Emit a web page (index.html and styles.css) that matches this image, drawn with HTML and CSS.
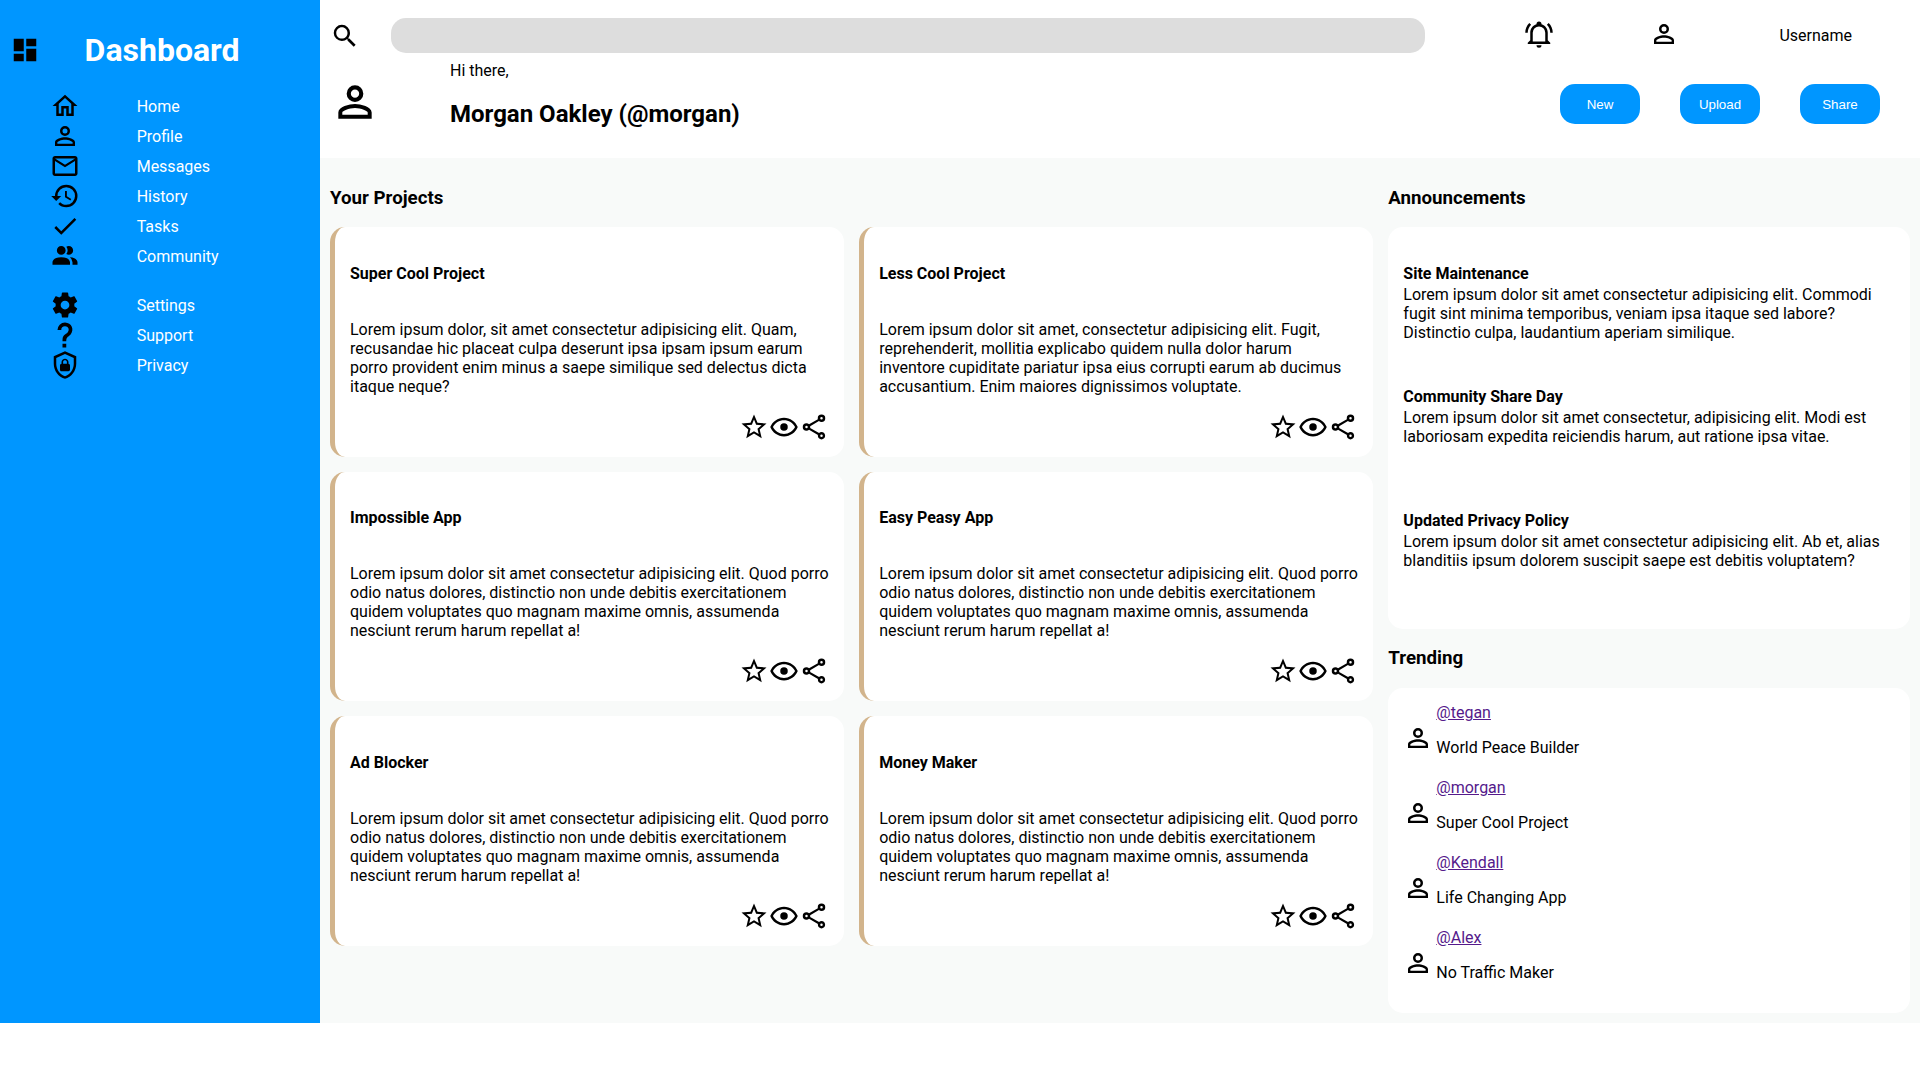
FILE: index.html
```html
<!DOCTYPE html>
<html lang="en">
<head>
<meta charset="utf-8">
<title>Dashboard</title>
<link rel="stylesheet" href="styles.css">
</head>
<body>
<svg class="sprite" aria-hidden="true">
  <symbol id="account" viewBox="0 0 24 24"><path d="M12,4A4,4 0 0,1 16,8A4,4 0 0,1 12,12A4,4 0 0,1 8,8A4,4 0 0,1 12,4M12,6A2,2 0 0,0 10,8A2,2 0 0,0 12,10A2,2 0 0,0 14,8A2,2 0 0,0 12,6M12,13C14.67,13 20,14.33 20,17V20H4V17C4,14.33 9.33,13 12,13M12,14.9C9.03,14.9 5.9,16.36 5.9,17V18.1H18.1V17C18.1,16.36 14.97,14.9 12,14.9Z"/></symbol>
  <symbol id="star" viewBox="0 0 24 24"><path d="M12,15.39L8.24,17.66L9.23,13.38L5.91,10.5L10.29,10.13L12,6.09L13.71,10.13L18.09,10.5L14.77,13.38L15.76,17.66M22,9.24L14.81,8.63L12,2L9.19,8.63L2,9.24L7.45,13.97L5.82,21L12,17.27L18.18,21L16.54,13.97L22,9.24Z"/></symbol>
  <symbol id="eye" viewBox="0 0 24 24"><path d="M12,9A3,3 0 0,1 15,12A3,3 0 0,1 12,15A3,3 0 0,1 9,12A3,3 0 0,1 12,9M12,4.5C17,4.5 21.27,7.61 23,12C21.27,16.39 17,19.5 12,19.5C7,19.5 2.73,16.39 1,12C2.73,7.61 7,4.5 12,4.5M3.18,12C4.83,15.36 8.24,17.5 12,17.5C15.76,17.5 19.17,15.36 20.82,12C19.17,8.64 15.76,6.5 12,6.5C8.24,6.5 4.83,8.64 3.18,12Z"/></symbol>
  <symbol id="share" viewBox="0 0 24 24"><path d="M18,16.08C17.24,16.08 16.56,16.38 16.04,16.85L8.91,12.7C8.96,12.47 9,12.24 9,12C9,11.76 8.96,11.53 8.91,11.3L15.96,7.19C16.5,7.69 17.21,8 18,8A3,3 0 0,0 21,5A3,3 0 0,0 18,2A3,3 0 0,0 15,5C15,5.24 15.04,5.47 15.09,5.7L8.04,9.81C7.5,9.31 6.79,9 6,9A3,3 0 0,0 3,12A3,3 0 0,0 6,15C6.79,15 7.5,14.69 8.04,14.19L15.16,18.34C15.11,18.55 15.08,18.77 15.08,19C15.08,20.61 16.39,21.91 18,21.91C19.61,21.91 20.92,20.61 20.92,19C20.92,17.39 19.61,16.08 18,16.08M18,4A1,1 0 0,1 19,5A1,1 0 0,1 18,6A1,1 0 0,1 17,5A1,1 0 0,1 18,4M6,13A1,1 0 0,1 5,12A1,1 0 0,1 6,11A1,1 0 0,1 7,12A1,1 0 0,1 6,13M18,20A1,1 0 0,1 17,19A1,1 0 0,1 18,18A1,1 0 0,1 19,19A1,1 0 0,1 18,20Z"/></symbol>
</svg>
<div class="page">
  <aside class="sidebar">
    <div class="brand">
      <svg class="icon" viewBox="0 0 24 24"><path d="M13,3V9H21V3M13,21H21V11H13M3,21H11V15H3M3,13H11V3H3V13Z"/></svg>
      <h1>Dashboard</h1>
    </div>
    <nav class="menu">
      <div class="item"><svg class="icon" viewBox="0 0 24 24"><path d="M12,5.69L17,10.19V18H15V12H9V18H7V10.19L12,5.69M12,3L2,12H5V20H11V14H13V20H19V12H22"/></svg><span>Home</span></div>
      <div class="item"><svg class="icon"><use href="#account"/></svg><span>Profile</span></div>
      <div class="item"><svg class="icon" viewBox="0 0 24 24"><path d="M22 6C22 4.9 21.1 4 20 4H4C2.9 4 2 4.9 2 6V18C2 19.1 2.9 20 4 20H20C21.1 20 22 19.1 22 18V6M20 6L12 11L4 6H20M20 18H4V8L12 13L20 8V18Z"/></svg><span>Messages</span></div>
      <div class="item"><svg class="icon" viewBox="0 0 24 24"><path d="M13.5,8H12V13L16.28,15.54L17,14.33L13.5,12.25V8M13,3A9,9 0 0,0 4,12H1L4.96,16.03L9,12H6A7,7 0 0,1 13,5A7,7 0 0,1 20,12A7,7 0 0,1 13,19C11.07,19 9.32,18.21 8.06,16.94L6.64,18.36C8.27,20 10.5,21 13,21A9,9 0 0,0 22,12A9,9 0 0,0 13,3"/></svg><span>History</span></div>
      <div class="item"><svg class="icon" viewBox="0 0 24 24"><path d="M21,7L9,19L3.5,13.5L4.91,12.09L9,16.17L19.59,5.59L21,7Z"/></svg><span>Tasks</span></div>
      <div class="item"><svg class="icon" viewBox="0 0 24 24"><path d="M16 17V19H2V17S2 13 9 13 16 17 16 17M12.5 7.5A3.5 3.5 0 1 0 9 11A3.5 3.5 0 0 0 12.5 7.5M15.94 13A5.32 5.32 0 0 1 18 17V19H22V17S22 13.37 15.94 13M15 4A3.39 3.39 0 0 0 13.07 4.59A5 5 0 0 1 13.07 10.41A3.39 3.39 0 0 0 15 11A3.5 3.5 0 0 0 15 4Z"/></svg><span>Community</span></div>
    </nav>
    <nav class="menu">
      <div class="item"><svg class="icon" viewBox="0 0 24 24"><path d="M12,15.5A3.5,3.5 0 0,1 8.5,12A3.5,3.5 0 0,1 12,8.5A3.5,3.5 0 0,1 15.5,12A3.5,3.5 0 0,1 12,15.5M19.43,12.97C19.47,12.65 19.5,12.33 19.5,12C19.5,11.67 19.47,11.34 19.43,11L21.54,9.37C21.73,9.22 21.78,8.95 21.66,8.73L19.66,5.27C19.54,5.05 19.27,4.96 19.05,5.05L16.56,6.05C16.04,5.66 15.5,5.32 14.87,5.07L14.5,2.42C14.46,2.18 14.25,2 14,2H10C9.75,2 9.54,2.18 9.5,2.42L9.13,5.07C8.5,5.32 7.96,5.66 7.44,6.05L4.95,5.05C4.73,4.96 4.46,5.05 4.34,5.27L2.34,8.73C2.21,8.95 2.27,9.22 2.46,9.37L4.57,11C4.53,11.34 4.5,11.67 4.5,12C4.5,12.33 4.53,12.65 4.57,12.97L2.46,14.63C2.27,14.78 2.21,15.05 2.34,15.27L4.34,18.73C4.46,18.95 4.73,19.03 4.95,18.95L7.44,17.94C7.96,18.34 8.5,18.68 9.13,18.93L9.5,21.58C9.54,21.82 9.75,22 10,22H14C14.25,22 14.46,21.82 14.5,21.58L14.87,18.93C15.5,18.67 16.04,18.34 16.56,17.94L19.05,18.95C19.27,19.03 19.54,18.95 19.66,18.73L21.66,15.27C21.78,15.05 21.73,14.78 21.54,14.63L19.43,12.97Z"/></svg><span>Settings</span></div>
      <div class="item"><svg class="icon" viewBox="0 0 24 24"><path d="M10,19H13V22H10V19M12,2C17.35,2.22 19.68,7.62 16.5,11.67C15.67,12.67 14.33,13.33 13.67,14.17C13,15 13,16 13,17H10C10,15.33 10,13.92 10.67,12.92C11.33,11.92 12.67,11.33 13.5,10.67C15.92,8.43 15.32,5.26 12,5A3,3 0 0,0 9,8H6A6,6 0 0,1 12,2Z"/></svg><span>Support</span></div>
      <div class="item"><svg class="icon" viewBox="0 0 24 24"><path d="M21,11C21,16.55 17.16,21.74 12,23C6.84,21.74 3,16.55 3,11V5L12,1L21,5V11M12,21C15.75,20 19,15.54 19,11.22V6.3L12,3.18L5,6.3V11.22C5,15.54 8.25,20 12,21M14.8,11V9.5C14.8,8.1 13.4,7 12,7C10.6,7 9.2,8.1 9.2,9.5V11C8.6,11 8,11.6 8,12.2V15.7C8,16.4 8.6,17 9.2,17H14.7C15.4,17 16,16.4 16,15.8V12.3C16,11.6 15.4,11 14.8,11M13.5,11H10.5V9.5C10.5,8.7 11.2,8.2 12,8.2C12.8,8.2 13.5,8.7 13.5,9.5V11Z"/></svg><span>Privacy</span></div>
    </nav>
  </aside>

  <header class="header">
    <div class="topbar">
      <svg class="icon" viewBox="0 0 24 24"><path d="M9.5,3A6.5,6.5 0 0,1 16,9.5C16,11.11 15.41,12.59 14.44,13.73L14.71,14H15.5L20.5,19L19,20.5L14,15.5V14.71L13.73,14.44C12.59,15.41 11.11,16 9.5,16A6.5,6.5 0 0,1 3,9.5A6.5,6.5 0 0,1 9.5,3M9.5,5C7,5 5,7 5,9.5C5,12 7,14 9.5,14C12,14 14,12 14,9.5C14,7 12,5 9.5,5Z"/></svg>
      <div class="search"></div>
      <div class="user">
        <svg class="icon" viewBox="0 0 24 24"><path d="M10,21H14A2,2 0 0,1 12,23A2,2 0 0,1 10,21M21,19V20H3V19L5,17V11C5,7.9 7.03,5.17 10,4.29C10,4.19 10,4.1 10,4A2,2 0 0,1 12,2A2,2 0 0,1 14,4C14,4.1 14,4.19 14,4.29C16.97,5.17 19,7.9 19,11V17L21,19M17,11A5,5 0 0,0 12,6A5,5 0 0,0 7,11V18H17V11M19.75,3.19L18.33,4.61C20.04,6.3 21,8.6 21,11H23C23,8.07 21.84,5.25 19.75,3.19M1,11H3C3,8.6 3.96,6.3 5.67,4.61L4.25,3.19C2.16,5.25 1,8.07 1,11Z"/></svg>
        <svg class="icon"><use href="#account"/></svg>
        <span>Username</span>
      </div>
    </div>
    <div class="welcome">
      <svg class="icon avatar"><use href="#account"/></svg>
      <div class="greeting"><p>Hi there,</p><h2>Morgan Oakley (@morgan)</h2></div>
      <div class="actions"><button>New</button><button>Upload</button><button>Share</button></div>
    </div>
  </header>

  <main class="content">
    <section class="projects">
      <h3>Your Projects</h3>
      <div class="cards">
        <article class="card"><h4>Super Cool Project</h4><p>Lorem ipsum dolor, sit amet consectetur adipisicing elit. Quam, recusandae hic placeat culpa deserunt ipsa ipsam ipsum earum porro provident enim minus a saepe similique sed delectus dicta itaque neque?</p><div class="tools"><svg class="icon"><use href="#star"/></svg><svg class="icon"><use href="#eye"/></svg><svg class="icon"><use href="#share"/></svg></div></article>
        <article class="card"><h4>Less Cool Project</h4><p>Lorem ipsum dolor sit amet, consectetur adipisicing elit. Fugit, reprehenderit, mollitia explicabo quidem nulla dolor harum inventore cupiditate pariatur ipsa eius corrupti earum ab ducimus accusantium. Enim maiores dignissimos voluptate.</p><div class="tools"><svg class="icon"><use href="#star"/></svg><svg class="icon"><use href="#eye"/></svg><svg class="icon"><use href="#share"/></svg></div></article>
        <article class="card"><h4>Impossible App</h4><p>Lorem ipsum dolor sit amet consectetur adipisicing elit. Quod porro odio natus dolores, distinctio non unde debitis exercitationem quidem voluptates quo magnam maxime omnis, assumenda nesciunt rerum harum repellat a!</p><div class="tools"><svg class="icon"><use href="#star"/></svg><svg class="icon"><use href="#eye"/></svg><svg class="icon"><use href="#share"/></svg></div></article>
        <article class="card"><h4>Easy Peasy App</h4><p>Lorem ipsum dolor sit amet consectetur adipisicing elit. Quod porro odio natus dolores, distinctio non unde debitis exercitationem quidem voluptates quo magnam maxime omnis, assumenda nesciunt rerum harum repellat a!</p><div class="tools"><svg class="icon"><use href="#star"/></svg><svg class="icon"><use href="#eye"/></svg><svg class="icon"><use href="#share"/></svg></div></article>
        <article class="card"><h4>Ad Blocker</h4><p>Lorem ipsum dolor sit amet consectetur adipisicing elit. Quod porro odio natus dolores, distinctio non unde debitis exercitationem quidem voluptates quo magnam maxime omnis, assumenda nesciunt rerum harum repellat a!</p><div class="tools"><svg class="icon"><use href="#star"/></svg><svg class="icon"><use href="#eye"/></svg><svg class="icon"><use href="#share"/></svg></div></article>
        <article class="card"><h4>Money Maker</h4><p>Lorem ipsum dolor sit amet consectetur adipisicing elit. Quod porro odio natus dolores, distinctio non unde debitis exercitationem quidem voluptates quo magnam maxime omnis, assumenda nesciunt rerum harum repellat a!</p><div class="tools"><svg class="icon"><use href="#star"/></svg><svg class="icon"><use href="#eye"/></svg><svg class="icon"><use href="#share"/></svg></div></article>
      </div>
    </section>
    <section class="side">
      <h3>Announcements</h3>
      <div class="panel announcements">
        <div><h4>Site Maintenance</h4><p>Lorem ipsum dolor sit amet consectetur adipisicing elit. Commodi fugit sint minima temporibus, veniam ipsa itaque sed labore? Distinctio culpa, laudantium aperiam similique.</p></div>
        <div><h4>Community Share Day</h4><p>Lorem ipsum dolor sit amet consectetur, adipisicing elit. Modi est laboriosam expedita reiciendis harum, aut ratione ipsa vitae.</p></div>
        <div><h4>Updated Privacy Policy</h4><p>Lorem ipsum dolor sit amet consectetur adipisicing elit. Ab et, alias blanditiis ipsum dolorem suscipit saepe est debitis voluptatem?</p></div>
      </div>
      <h3 class="trending-title">Trending</h3>
      <div class="panel trending">
        <div class="trend"><svg class="icon"><use href="#account"/></svg><div><a href="#">@tegan</a><p>World Peace Builder</p></div></div>
        <div class="trend"><svg class="icon"><use href="#account"/></svg><div><a href="#">@morgan</a><p>Super Cool Project</p></div></div>
        <div class="trend"><svg class="icon"><use href="#account"/></svg><div><a href="#">@Kendall</a><p>Life Changing App</p></div></div>
        <div class="trend"><svg class="icon"><use href="#account"/></svg><div><a href="#">@Alex</a><p>No Traffic Maker</p></div></div>
      </div>
    </section>
  </main>
</div>
</body>
</html>
```
FILE: styles.css
```css
* { box-sizing: border-box; }

body {
  margin: 0;
  background: #fff;
  color: #000;
  font-family: Roboto, sans-serif;
  font-size: 16px;
  line-height: 19px;
}

h1, h2, h3, h4, p { margin: 0; }

.sprite { display: none; }

.icon {
  display: block;
  flex: none;
  width: 30px;
  height: 30px;
}

.page {
  display: grid;
  grid-template-columns: 320px 1fr;
  grid-template-rows: 158px 865px;
}

/* Sidebar */
.sidebar {
  grid-row: 1 / 3;
  background: #0096ff;
  color: #fff;
}

.sidebar .icon { color: #000; }

.brand {
  display: flex;
  align-items: center;
  gap: 44.6px;
  height: 91px;
  padding: 9px 10px 0;
}

.brand h1 {
  font-size: 32px;
  line-height: 38px;
}

.menu { padding-left: 50px; }
.menu + .menu { margin-top: 19px; }

.item {
  display: flex;
  align-items: center;
  gap: 56.67px;
  height: 30px;
}

/* Header */
.header { background: #fff; }

.topbar {
  display: flex;
  align-items: center;
  height: 53px;
  padding: 18px 10px 0;
}

.search {
  width: 1034px;
  height: 35px;
  margin-left: 31px;
  border-radius: 15px;
  background: #ddd;
}

.user {
  display: flex;
  align-items: center;
  margin-left: 98.8px;
}

.user .icon { margin-bottom: 3px; }
.user .icon + .icon { margin-left: 95.2px; }
.user span { margin-left: 100.4px; }

.welcome {
  display: flex;
  height: 105px;
  padding: 0 40px 0 10px;
}

.avatar {
  width: 50px;
  height: 50px;
  margin-top: 24px;
}

.greeting {
  flex: 1;
  margin-left: 70px;
  padding-top: 8px;
}

.greeting h2 {
  margin-top: 20px;
  font-size: 24px;
  line-height: 28px;
}

.actions {
  display: flex;
  gap: 40px;
  padding-top: 31px;
}

.actions button {
  width: 80px;
  height: 40px;
  padding: 0;
  border: 0;
  border-radius: 15px;
  background: #0096ff;
  color: #fff;
  font: 13.333px "Liberation Sans", Arial, sans-serif;
}

/* Content */
.content {
  display: grid;
  grid-template-columns: 2fr 1fr;
  gap: 15px;
  padding: 0 10px;
  background: #f8faf9;
}

h3 {
  height: 69.15px;
  padding-top: 29px;
  font-size: 18.72px;
  line-height: 22px;
}

.cards {
  display: grid;
  grid-template-columns: 1fr 1fr;
  grid-template-rows: repeat(3, 229.66px);
  gap: 15px;
}

.card {
  display: flex;
  flex-direction: column;
  padding: 36.4px 15px 15px;
  border-left: 5px solid tan;
  border-radius: 15px;
  background: #fff;
}

.card p { margin-top: 37.2px; }

.tools {
  display: flex;
  justify-content: flex-end;
  margin-top: auto;
}

.panel {
  border-radius: 15px;
  background: #fff;
}

.announcements {
  display: grid;
  grid-template-rows: repeat(3, 123.6px);
  height: 402px;
  padding: 36.4px 15px 0;
}

.announcements p { margin-top: 2px; }

.trending-title {
  height: 59px;
  padding-top: 18px;
}

.trending {
  height: 325px;
  padding: 15px;
}

.trend {
  display: flex;
  gap: 3px;
  height: 75px;
}

.trend .icon { margin-top: 20px; }
.trend p { margin-top: 16px; }
.trend a { color: #551a8b; }
```
